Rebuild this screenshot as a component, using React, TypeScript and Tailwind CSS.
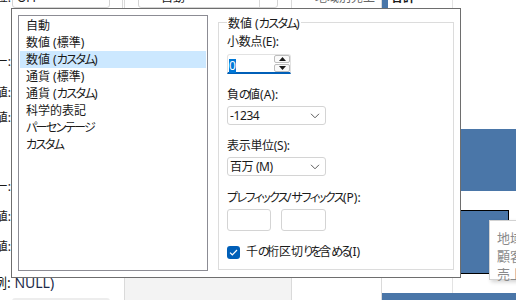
import React from "react";

const formats = [
  "自動",
  "数値 (標準)",
  "数値 (カスタム)",
  "通貨 (標準)",
  "通貨 (カスタム)",
  "科学的表記",
  "パーセンテージ",
  "カスタム",
];

// kana in the UI font is narrower than in Noto CJK, so tighten kana runs only
const Jp = ({ t }: { t: string }) => (
  <>
    {t.split(/([\u3040-\u309f]+|[\u30a0-\u30ff]+)/).map((s, i) =>
      /[\u3040-\u309f]/.test(s) ? (
        <span key={i} className="tracking-[-2.5px]">{s}</span>
      ) : /[\u30a0-\u30ff]/.test(s) ? (
        <span key={i} className="tracking-[-1.6px]">{s}</span>
      ) : (
        s
      )
    )}
  </>
);

const Chevron = () => (
  <svg width="10" height="6" viewBox="0 0 10 6" className="text-[#5c5c5c]">
    <path d="M1 0.8L5 4.8L9 0.8" fill="none" stroke="currentColor" strokeWidth="1" />
  </svg>
);

const Select = ({ value }: { value: string }) => (
  <div className="flex items-center justify-between w-[99px] h-[19px] border border-[#d4d4d4] rounded-[3px] bg-white pl-[2px] pr-[5px] leading-[16px]">
    <span className="tracking-[-0.4px]">{value}</span>
    <Chevron />
  </div>
);

const CutLabel = ({ text, className }: { text: string; className: string }) => (
  <div className={`shrink-0 flex justify-end w-[11px] overflow-hidden h-[16px] leading-[16px] ${className}`}>
    <span className="whitespace-nowrap shrink-0">{text}</span>
  </div>
);

export default function App() {
  return (
    <div className="relative w-[516px] h-[300px] overflow-hidden bg-white text-[12px] text-[#1a1a1a] font-['Noto_Sans','Noto_Sans_CJK_JP',sans-serif] [font-feature-settings:'palt']">
      {/* page behind the popup */}
      <div className="flex h-full">
        <div className="w-[125px] border-r border-[#dadada] flex flex-col overflow-hidden">
          <div className="shrink-0 flex -mt-[12px] h-[20px]">
            <CutLabel text="表示単位:" className="mt-[2px]" />
            <div className="ml-[1px] w-[98px] h-[20px] border border-[#d4d4d4] rounded-[3px] flex items-center justify-between pl-[4px] pr-[6px]">
              <span>OFF</span>
              <Chevron />
            </div>
            <div className="ml-[12px] w-px h-full bg-[#dadada]" />
          </div>
          <CutLabel text="カテゴリー:" className="mt-[46px]" />
          <CutLabel text="最小値:" className="mt-[15px]" />
          <CutLabel text="最大値:" className="mt-[9px]" />
          <CutLabel text="カテゴリー:" className="mt-[53px]" />
          <CutLabel text="既定値:" className="mt-[14px]" />
          <CutLabel text="空の値:" className="mt-[14px]" />
          <div className="shrink-0 mt-[20px] -ml-[7px] h-[16px] leading-[16px] text-[14px] whitespace-nowrap">
            例: <span className="text-[#1c2a4a]">NULL)</span>
          </div>
          <div className="shrink-0 mt-[7px] ml-[12px] w-[98px] h-[10px] bg-[#ededed] rounded-t-[3px]" />
        </div>

        <div className="w-[167px] border-r border-[#dadada] flex flex-col">
          <div className="shrink-0 flex -mt-[12px] ml-[13px] w-[140px] h-[20px] border border-[#d4d4d4] rounded-[3px] items-center">
            <span className="pl-[6px] text-[#9a9a9a]">⋯</span>
            <span className="pl-[4px]">自動</span>
            <div className="ml-auto mr-[17px] w-px h-full bg-[#dadada]" />
          </div>
          <div className="flex-1" />
          <div className="shrink-0 h-[23px] bg-[#f3f3f3]" />
        </div>

        <div className="w-[90px] border-r border-[#dadada] flex flex-col">
          <div className="-mt-[10px] h-[16px] leading-[16px] text-right pr-[6px] text-[#666]">地域別売上</div>
        </div>

        <div className="w-[134px] flex flex-col">
          <div className="flex flex-1">
            <div className="w-[71px] border-r border-[#e3e3e3] flex">
              <div className="w-[6px] h-[8px] bg-[#4a76a8]" />
              <div className="-mt-[10px] ml-[3px] h-[16px] leading-[16px] font-bold">合計</div>
            </div>
            <div className="flex-1 flex flex-col">
              <div className="shrink-0 mt-[129px] h-[62px] bg-[#4a76a8]" />
              <div className="shrink-0 mt-[19px] w-[56px] h-[64px] bg-[#4a76a8] border border-black" />
            </div>
          </div>
          <div className="shrink-0 h-[7px] bg-[#4a76a8]" />
        </div>
      </div>

      {/* tooltip over the chart */}
      <div className="absolute left-[489px] top-[220px] w-[40px] h-[60px] bg-white border border-[#d2d2d2] shadow-[2px_2px_4px_rgba(0,0,0,0.18)] pt-[8px] pl-[7px] text-[13px] leading-[18px] text-[#8a8a8a] whitespace-nowrap">
        <div>地域</div>
        <div>顧客</div>
        <div>売上</div>
      </div>

      {/* format popup */}
      <div className="absolute left-[11px] top-[8px] w-[450px] h-[270px] bg-white border border-[#6e6e6e] flex gap-[10px] p-[6px]">
        <ul className="w-[190px] h-[256px] border border-[#8c8c94] p-[1px]">
          {formats.map((f, i) => (
            <li
              key={f}
              className={`h-[17px] leading-[17px] pl-[6px] whitespace-pre ${i === 2 ? "bg-[#cce8ff]" : ""}`}
            >
              <Jp t={f} />
            </li>
          ))}
        </ul>

        <div className="w-[236px] h-[248px] mt-[7px] border border-[#dcdcdc] pl-[8px] flex flex-col items-start">
          <div className="-mt-[7px] px-[1px] bg-white h-[16px] leading-[16px] whitespace-pre">
            <Jp t="数値 (カスタム)" />
          </div>

          <div className="mt-[2px] h-[16px] leading-[16px] tracking-[-0.2px]">小数点(E):</div>
          <div className="mt-[4px] flex w-[64px] h-[20px] border border-[#e2e2e2] border-b-2 border-b-[#005fb8] rounded-t-[3px] bg-white">
            <div className="flex-1 pl-[1px] pt-[2px]">
              <span className="inline-block h-[14px] leading-[14px] bg-[#0078d7] text-white">0</span>
            </div>
            <div className="flex flex-col w-[16px] gap-[1px]">
              <div className="h-[8px] border border-[#bdbdbd] rounded-[2px] bg-[#fafafa] flex items-center justify-center">
                <svg width="7" height="4" viewBox="0 0 7 4"><path d="M0 4L3.5 0L7 4Z" fill="#1a1a1a" /></svg>
              </div>
              <div className="h-[8px] border border-[#bdbdbd] rounded-[2px] bg-[#fafafa] flex items-center justify-center">
                <svg width="7" height="4" viewBox="0 0 7 4"><path d="M0 0L3.5 4L7 0Z" fill="#1a1a1a" /></svg>
              </div>
            </div>
          </div>

          <div className="mt-[13px] h-[16px] leading-[16px]">
            <Jp t="負の値(A):" />
          </div>
          <div className="mt-[3px]"><Select value="-1234" /></div>

          <div className="mt-[13px] h-[16px] leading-[16px] tracking-[-0.3px]">表示単位(S):</div>
          <div className="mt-[3px]"><Select value="百万 (M)" /></div>

          <div className="mt-[14px] h-[16px] leading-[16px]">
            <Jp t="プレフィックス/サフィックス(P):" />
          </div>
          <div className="mt-[3px] flex gap-[10px]">
            <div className="w-[44px] h-[22px] border border-[#d4d4d4] rounded-[3px] bg-white" />
            <div className="w-[45px] h-[22px] border border-[#d4d4d4] rounded-[3px] bg-white" />
          </div>

          <div className="mt-[13px] flex items-center gap-[6px] h-[16px] leading-[16px]">
            <div className="w-[13px] h-[13px] rounded-[3px] bg-[#005fb8] flex items-center justify-center">
              <svg width="9" height="7" viewBox="0 0 9 7">
                <path d="M1 3.6L3.3 5.8L8 1" fill="none" stroke="white" strokeWidth="1.2" />
              </svg>
            </div>
            <span>
              <Jp t="千の桁区切りを含める(I)" />
            </span>
          </div>
        </div>
      </div>
    </div>
  );
}
